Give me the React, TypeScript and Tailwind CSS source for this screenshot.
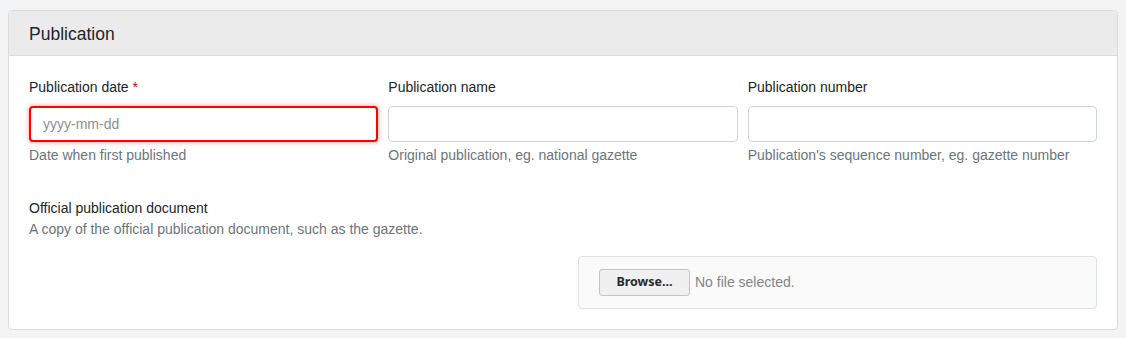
import React from 'react';

// Simple publication form section
const fields = [
  { label: 'Publication date', required: true, placeholder: 'yyyy-mm-dd', help: 'Date when first published', invalid: true },
  { label: 'Publication name', required: false, placeholder: '', help: 'Original publication, eg. national gazette', invalid: false },
  { label: 'Publication number', required: false, placeholder: '', help: "Publication's sequence number, eg. gazette number", invalid: false },
];

const App: React.FC = () => {
  return (
    <div className="min-h-[338px] bg-[#f3f4f5] px-2 pt-[10px] font-['Liberation_Sans',Arial,sans-serif] text-[#212529]">
      <div className="rounded border border-[#dadcdd] bg-white overflow-hidden">
        <div className="h-[45px] flex items-center px-5 pt-[3px] bg-[#ebebeb] border-b border-[#dadcdd]">
          <h2 className="text-[17.5px] leading-none">Publication</h2>
        </div>

        <div className="px-5 pt-[21px] pb-5">
          <div className="grid grid-cols-3 gap-[10px]">
            {fields.map((f) => (
              <div key={f.label}>
                <label className="block text-[14px] leading-5">
                  {f.label}
                  {f.required && <span className="text-[#e3000f]"> *</span>}
                </label>
                <input
                  type="text"
                  placeholder={f.placeholder}
                  className={`mt-[9px] block w-full h-[36px] rounded px-3 text-[14px] bg-white outline-none placeholder:text-[#8a9096] ${
                    f.invalid
                      ? 'border-2 border-[#f00] shadow-[0_0_4px_1px_rgba(255,0,0,0.3)]'
                      : 'border border-[#ced4da]'
                  }`}
                />
                <p className="mt-[3px] text-[14px] leading-5 text-[#6c757d]">{f.help}</p>
              </div>
            ))}
          </div>

          <div className="mt-[33px]">
            <p className="text-[14px] leading-5">Official publication document</p>
            <p className="mt-px text-[14px] leading-5 text-[#6c757d]">A copy of the official publication document, such as the gazette.</p>
          </div>

          <div className="mt-[17px] flex justify-end">
            <div className="w-[519px] h-[53px] flex items-center px-5 rounded border border-[#dee2e6] bg-[#fafafa]">
              <button className="h-[27px] w-[91px] rounded-[3px] border border-[#c4c4c4] bg-[#f0f0f0] text-[12.5px] font-bold text-[#2a2a2a] font-['Noto_Sans',sans-serif]">
                Browse...
              </button>
              <span className="ml-[5px] text-[14px] text-[#808589]">No file selected.</span>
            </div>
          </div>
        </div>
      </div>
    </div>
  );
};

export default App;
